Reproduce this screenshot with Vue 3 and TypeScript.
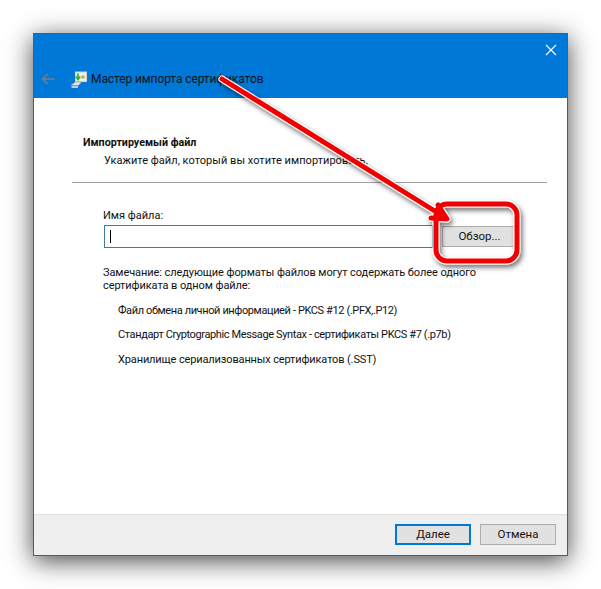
<script setup lang="ts">
const formats: string[] = [
  'Файл обмена личной информацией - PKCS #12 (.PFX,.P12)',
  'Стандарт Cryptographic Message Syntax - сертификаты PKCS #7 (.p7b)',
  'Хранилище сериализованных сертификатов (.SST)',
]
</script>

<template>
  <div class="stage">
    <div class="window">
      <header class="titlebar">
        <div class="close-row">
          <svg class="close" width="12" height="12" viewBox="0 0 12 12">
            <path d="M1 1L11 11M11 1L1 11" stroke="#fff" stroke-width="1.1" fill="none" />
          </svg>
        </div>
        <div class="title-row">
          <svg class="back" width="14" height="12" viewBox="0 0 14 12">
            <path d="M13.5 6H2M6.5 1.2L1.7 6l4.8 4.8" stroke="#6f7f92" stroke-width="1.7" fill="none" />
          </svg>
          <svg class="app-icon" width="17" height="17" viewBox="0 0 17 17">
            <rect x="5.5" y="1" width="11" height="9.5" fill="#e9efe9" stroke="#cfd6d2" stroke-width="1" />
            <circle cx="13" cy="6" r="1.8" fill="#d9a441" />
            <path d="M8 2.5v5M5.8 5.5L8 8.5l2.2-3" stroke="#3fae3a" stroke-width="1.8" fill="none" />
            <path d="M1 14l4.5-3h6l-3 3.4H3z" fill="#e6e8e6" stroke="#8f9896" stroke-width=".7" />
            <path d="M1.5 16h6.5" stroke="#f4f6f4" stroke-width="1.4" />
          </svg>
          <span class="title">Мастер импорта сертификатов</span>
        </div>
      </header>

      <main class="content">
        <h1 class="heading">Импортируемый файл</h1>
        <p class="subheading">Укажите файл, который вы хотите импортировать.</p>
        <hr class="separator" />
        <div class="form">
          <label class="label">Имя файла:</label>
          <div class="file-row">
            <div class="input"><span class="caret"></span></div>
            <button class="btn browse">Обзор...</button>
          </div>
          <p class="note">Замечание: следующие форматы файлов могут содержать более одного<br />сертификата в одном файле:</p>
          <ul class="formats">
            <li v-for="item in formats" :key="item">{{ item }}</li>
          </ul>
        </div>
      </main>

      <footer class="footer">
        <button class="btn primary">Далее</button>
        <button class="btn">Отмена</button>
      </footer>
    </div>

    <svg class="annotation" width="601" height="589" viewBox="0 0 601 589">
      <defs>
        <filter id="sh" x="-10%" y="-10%" width="120%" height="120%">
          <feDropShadow dx="2" dy="3" stdDeviation="2.5" flood-color="#000" flood-opacity=".55" />
        </filter>
      </defs>
      <g filter="url(#sh)" fill="none" stroke-linecap="round" stroke-linejoin="round">
        <rect x="436" y="204" width="81" height="57" rx="11" stroke="#fff" stroke-width="7" />
        <path d="M222 79L446 218M438 205L447 219L431 218" stroke="#fff" stroke-width="7" />
        <rect x="436" y="204" width="81" height="57" rx="11" stroke="#f00000" stroke-width="5" />
        <path d="M222 79L446 218M438 205L447 219L431 218" stroke="#f00000" stroke-width="5" />
      </g>
    </svg>
  </div>
</template>

<style>
html, body { margin: 0; background: #fff; }
</style>

<style scoped>
.stage {
  position: relative;
  width: 601px;
  height: 589px;
  padding: 33px;
  box-sizing: border-box;
  overflow: hidden;
  background: #fff;
  font-family: Roboto, "Noto Sans", sans-serif;
  font-size: 11px;
  color: #111;
}
.window {
  width: 535px;
  height: 523px;
  box-sizing: border-box;
  border: 1px solid #0a6fc4;
  display: flex;
  flex-direction: column;
  background: #fff;
  box-shadow: 0 5px 24px rgba(0, 0, 0, 0.72);
}
.titlebar {
  height: 64px;
  flex: none;
  background: #0078d7;
  display: flex;
  flex-direction: column;
}
.close-row {
  display: flex;
  justify-content: flex-end;
  padding: 10px 10px 0 0;
  height: 12px;
}
.title-row {
  display: flex;
  align-items: center;
  margin-top: 13px;
  height: 20px;
}
.back { margin-left: 7px; }
.app-icon { margin-left: 15px; }
.title {
  margin-left: 4px;
  font-size: 12px;
  letter-spacing: -0.1px;
  color: #0b1320;
}
.content {
  flex: 1;
  min-height: 0;
}
.heading {
  margin: 37px 0 0 49px;
  font-size: 10.7px;
  line-height: 15px;
  font-weight: 700;
}
.subheading {
  margin: 3px 0 0 70px;
  line-height: 16px;
  letter-spacing: 0.04px;
}
.separator {
  margin: 13px 20px 0 38px;
  border: 0;
  border-top: 1px solid #a0a0a0;
}
.form {
  padding: 25px 0 0 70px;
}
.label {
  display: block;
  margin-left: -1px;
  line-height: 16px;
}
.file-row {
  display: flex;
  align-items: center;
  gap: 9px;
  margin-top: 1px;
}
.input {
  width: 329px;
  height: 23px;
  box-sizing: border-box;
  border: 1px solid #3f7ba8;
  display: flex;
  align-items: center;
  padding-left: 5px;
}
.caret {
  width: 1px;
  height: 13px;
  background: #000;
}
.btn {
  width: 76px;
  height: 21px;
  padding: 0;
  box-sizing: border-box;
  border: 1px solid #adadad;
  background: #e1e1e1;
  color: #111;
  font: inherit;
  font-size: 11.5px;
  line-height: 17px;
}
.browse { width: 75px; }
.note {
  margin: 18px 0 0 -1px;
  line-height: 13px;
  letter-spacing: -0.08px;
}
.formats {
  list-style: none;
  margin: 11px 0 0;
  padding: 0 0 0 14px;
}
.formats li {
  line-height: 16px;
  margin-bottom: 8.3px;
  letter-spacing: -0.38px;
}
.formats li:last-child {
  letter-spacing: -0.13px;
}
.footer {
  height: 41px;
  flex: none;
  box-sizing: border-box;
  background: #efefef;
  border-top: 1px solid #dfdfdf;
  display: flex;
  justify-content: flex-end;
  align-items: flex-start;
  gap: 9px;
  padding: 9px 11px 0 0;
}
.primary {
  border: 2px solid #0078d7;
}
.annotation {
  position: absolute;
  left: 0;
  top: 0;
  pointer-events: none;
}
</style>
